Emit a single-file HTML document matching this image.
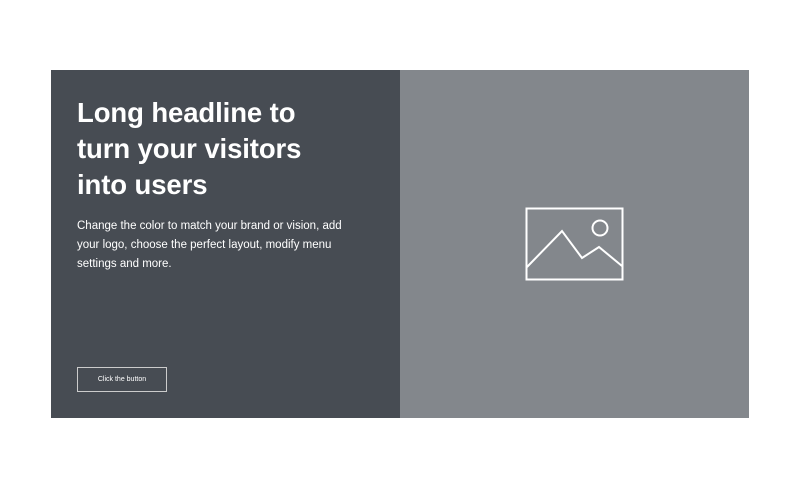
<!DOCTYPE html>
<html><head><style>
body{margin:0;width:800px;height:488px;background:#fff;position:relative;font-family:"Liberation Sans",sans-serif;overflow:hidden}
.l{position:absolute;left:51px;top:70px;width:349px;height:348px;background:#474c53}
.r{position:absolute;left:400px;top:70px;width:349px;height:348px;background:#83878c}
h1{position:absolute;left:77px;top:95px;margin:0;color:#fff;font-size:27.5px;line-height:36px;font-weight:bold;letter-spacing:-0.1px}
p{position:absolute;left:77px;top:217px;margin:0;color:#fff;font-size:11.5px;line-height:19px;width:280px}
.b{position:absolute;left:77px;top:367px;width:88px;height:23px;border:1px solid #ccc;color:#fff;font-size:7px;text-align:center;line-height:23px}
</style></head><body>
<div class="l"></div><div class="r"></div>
<h1>Long headline to<br>turn your visitors<br>into users</h1>
<p>Change the color to match your brand or vision, add your logo, choose the perfect layout, modify menu settings and more.</p>
<div class="b">Click the button</div>
<svg style="position:absolute;left:0;top:0" width="800" height="488"><g fill="none" stroke="#fff" stroke-width="2"><rect x="526.5" y="208.5" width="96" height="71"/><circle cx="600" cy="228" r="7.5"/><polyline points="527,267 562,231 582,258 599,247 622,266"/></g></svg>
</body></html>
